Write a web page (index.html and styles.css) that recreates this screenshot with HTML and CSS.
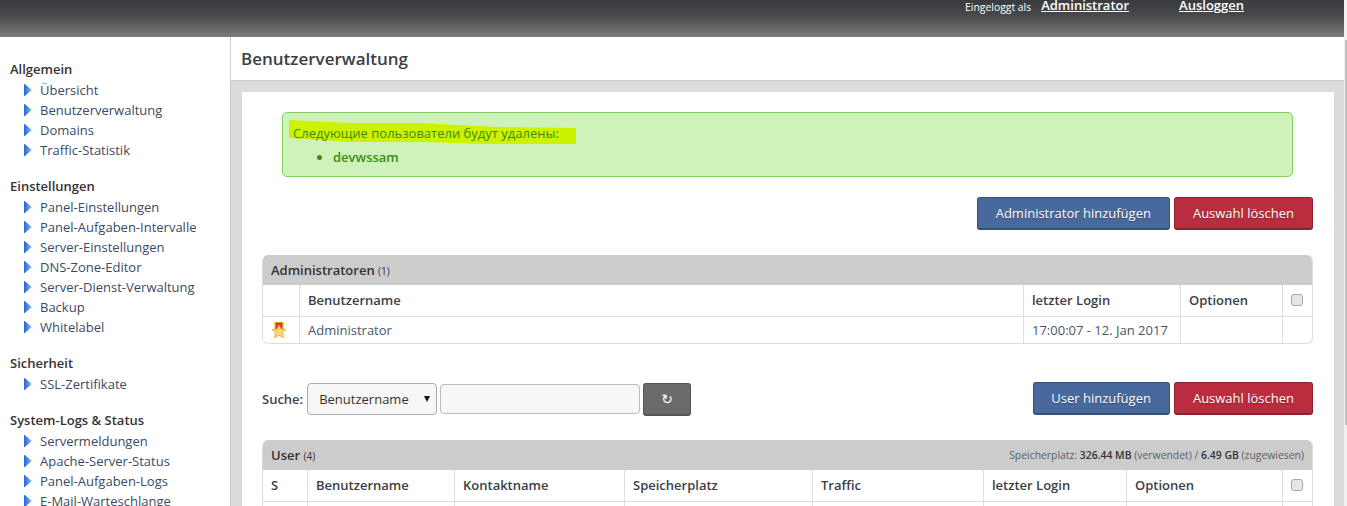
FILE: index.html
```html
<!DOCTYPE html>
<html lang="de">
<head>
<meta charset="utf-8">
<title>Benutzerverwaltung</title>
<link rel="stylesheet" href="styles.css">
</head>
<body>
<div class="frame">
<header class="topbar">
  <span class="login-label">Eingeloggt als</span>
  <a class="top-link top-link-admin" href="#">Administrator</a>
  <a class="top-link" href="#">Ausloggen</a>
</header>
<div class="shell">
  <nav class="sidebar">
    <h4>Allgemein</h4>
    <ul>
      <li><i class="arrow"></i>Übersicht</li>
      <li><i class="arrow"></i>Benutzerverwaltung</li>
      <li><i class="arrow"></i>Domains</li>
      <li><i class="arrow"></i>Traffic-Statistik</li>
    </ul>
    <h4>Einstellungen</h4>
    <ul>
      <li><i class="arrow"></i>Panel-Einstellungen</li>
      <li><i class="arrow"></i>Panel-Aufgaben-Intervalle</li>
      <li><i class="arrow"></i>Server-Einstellungen</li>
      <li><i class="arrow"></i>DNS-Zone-Editor</li>
      <li><i class="arrow"></i>Server-Dienst-Verwaltung</li>
      <li><i class="arrow"></i>Backup</li>
      <li><i class="arrow"></i>Whitelabel</li>
    </ul>
    <h4>Sicherheit</h4>
    <ul>
      <li><i class="arrow"></i>SSL-Zertifikate</li>
    </ul>
    <h4>System-Logs &amp; Status</h4>
    <ul>
      <li><i class="arrow"></i>Servermeldungen</li>
      <li><i class="arrow"></i>Apache-Server-Status</li>
      <li><i class="arrow"></i>Panel-Aufgaben-Logs</li>
      <li><i class="arrow"></i>E-Mail-Warteschlange</li>
    </ul>
  </nav>
  <main class="main">
    <h1 class="page-title">Benutzerverwaltung</h1>
    <div class="content">
      <section class="panel">
        <div class="alert">
          <svg class="marker" viewBox="0 0 287 25" preserveAspectRatio="none"><path d="M0 0L60 3L130 3L210 7L287 8L287 24L200 24L130 22L60 22L0 18Z" fill="#cdf200"/></svg>
          <p class="alert-text">Следующие пользователи будут удалены:</p>
          <ul class="alert-list"><li>devwssam</li></ul>
        </div>
        <div class="actions">
          <button class="btn btn-blue">Administrator hinzufügen</button>
          <button class="btn btn-red">Auswahl löschen</button>
        </div>
        <div class="box box-admin">
          <div class="box-head"><span class="box-title">Administratoren <small>(1)</small></span></div>
          <table>
            <colgroup><col class="ca1"><col class="ca2"><col class="ca3"><col class="ca4"><col class="ca5"></colgroup>
            <tr class="head-row"><th></th><th>Benutzername</th><th>letzter Login</th><th>Optionen</th><th class="check-cell"><span class="check"></span></th></tr>
            <tr class="data-row"><td class="star-cell"><svg class="star" viewBox="0 0 16 16"><path d="M3.5 0H12.5V8H3.5Z" fill="#e8962c"/><path d="M5 1H11V7H5Z" fill="#d43a30"/><path d="M8 3L10.2 7L15 7.6L11.5 10.8L12.6 15.8L8 13.3L3.4 15.8L4.5 10.8L1 7.6L5.8 7Z" fill="#fbd566" stroke="#e0a040" stroke-width=".7"/></svg></td><td>Administrator</td><td>17:00:07 - 12. Jan 2017</td><td></td><td></td></tr>
          </table>
        </div>
        <div class="toolbar">
          <form class="search">
            <label class="search-label">Suche:</label>
            <span class="select">Benutzername<i class="caret"></i></span>
            <span class="input"></span>
            <span class="refresh">↻</span>
          </form>
          <div class="toolbar-actions">
            <button class="btn btn-blue">User hinzufügen</button>
            <button class="btn btn-red">Auswahl löschen</button>
          </div>
        </div>
        <div class="box">
          <div class="box-head">
            <span class="box-title">User <small>(4)</small></span>
            <span class="quota">Speicherplatz: <b>326.44 MB</b> (verwendet) / <b>6.49 GB</b> (zugewiesen)</span>
          </div>
          <table>
            <colgroup><col class="cu1"><col class="cu2"><col class="cu3"><col class="cu4"><col class="cu5"><col class="cu6"><col class="cu7"><col class="cu8"></colgroup>
            <tr class="head-row"><th>S</th><th>Benutzername</th><th>Kontaktname</th><th>Speicherplatz</th><th>Traffic</th><th>letzter Login</th><th>Optionen</th><th class="check-cell"><span class="check"></span></th></tr>
            <tr class="data-row"><td></td><td></td><td></td><td></td><td></td><td></td><td></td><td></td></tr>
          </table>
        </div>
      </section>
    </div>
  </main>
</div>
</div>
<div class="scrollbar"></div>
</body>
</html>
```
FILE: styles.css
```css
* { box-sizing: border-box; }
html, body { margin: 0; height: 506px; overflow: hidden; }
body { display: flex; font-family: "Open Sans", "Noto Sans", sans-serif; font-size: 13px; color: #40454d; background: #fff; }
.frame { width: 1344px; flex: none; }

.topbar { height: 37px; display: flex; align-items: flex-start; justify-content: flex-end; padding-right: 100px; background: linear-gradient(#3a3b3e 0%, #46484b 40%, #7a7c7e 100%); color: #fff; }
.login-label { font-size: 10.4px; line-height: 14px; margin-top: 0; margin-right: 10px; }
.top-link { color: #fff; font-weight: 600; font-size: 13px; line-height: 11px; text-decoration: underline; }
.top-link-admin { margin-right: 50px; }

.shell { display: flex; height: 469px; }
.sidebar { width: 230px; flex: none; padding: 23px 0 0 10px; overflow: hidden; }
.sidebar h4 { margin: 0; font-size: 13px; font-weight: 600; line-height: 18px; color: #333; }
.sidebar ul { list-style: none; margin: 2px 0 17px; padding: 0 0 0 14px; }
.sidebar li { display: flex; align-items: center; height: 20px; color: #3b4a66; font-size: 13px; white-space: nowrap; }
.arrow { width: 8px; height: 13px; margin-right: 8px; flex: none; background: linear-gradient(90deg, #2a66d0 0%, #4d8ae0 45%, #a8c8f0 100%); clip-path: polygon(0 0, 100% 50%, 0 100%); }

.main { width: 1114px; flex: none; border-left: 1px solid #ccc; display: flex; flex-direction: column; }
.page-title { margin: 0; height: 44px; border-bottom: 1px solid #ccc; padding-left: 10px; font-size: 17px; font-weight: 600; line-height: 43px; color: #3a3f46; }
.content { flex: 1; background: #dcdcdc; padding: 11px 10px 0 11px; overflow: hidden; }
.panel { background: #fff; padding: 20px 21px 0 20px; width: 1092px; height: 420px; }

.alert { position: relative; height: 65px; width: 1011px; margin-left: 20px; background: #cff2bb; border: 1px solid #7ed05f; border-radius: 5px; padding: 10px; color: #3d8b12; }
.marker { position: absolute; left: 6px; top: 7px; width: 287px; height: 25px; }
.alert-text { position: relative; margin: 0; line-height: 20px; font-size: 13px; }
.alert-list { margin: 4px 0 0; padding-left: 40px; line-height: 20px; font-weight: 600; }
.actions { display: flex; justify-content: flex-end; gap: 4px; margin-top: 20px; width: 1051px; }
.btn { font: 13px "Open Sans", sans-serif; color: #fff; height: 33px; padding: 0 18px 1px; border-radius: 3px; border: 1px solid; border-bottom-width: 2px; text-shadow: 0 1px 1px rgba(0,0,0,.3); }
.btn-blue { background: #49689c; border-color: #34507e; }
.btn-red { background: #b92d3e; border-color: #8e2230; }

.box { width: 1051px; border: 1px solid #ddd; border-top: none; border-radius: 6px; overflow: hidden; }
.box-admin { margin-top: 25px; }
.box-head { height: 30px; background: #ccc; display: flex; justify-content: space-between; align-items: center; padding: 0 8px; }
.box-title { color: #333; font-size: 13px; font-weight: 600; }
.box-title small { font-size: 10px; font-weight: 400; }
.quota { font-size: 10.4px; color: #5a5e64; }
.quota b { font-weight: 600; color: #333; }
table { border-collapse: separate; border-spacing: 0; table-layout: fixed; width: 100%; }
th, td { border-left: 1px solid #ddd; border-bottom: 1px solid #ddd; padding: 0 0 0 8px; text-align: left; font-size: 13px; }
th:first-child, td:first-child { border-left: none; }
th { height: 32px; padding-bottom: 1px; font-weight: 600; color: #3a3f46; }
td { height: 26px; color: #4b5565; }
.box-admin tr:last-child td { border-bottom: none; }
.ca1 { width: 36px; } .ca3 { width: 157px; } .ca4 { width: 102px; } .ca5 { width: 30px; }
.cu1 { width: 44px; } .cu2 { width: 147px; } .cu3 { width: 170px; } .cu4 { width: 188px; } .cu5 { width: 171px; } .cu6 { width: 143px; } .cu7 { width: 156px; } .cu8 { width: 30px; }
.check { display: block; width: 12px; height: 12px; background: #e6e6e6; border: 1px solid #a5a5a5; border-radius: 3px; }
.star { display: block; width: 16px; height: 16px; }

.toolbar { display: flex; justify-content: space-between; align-items: flex-start; width: 1051px; margin-top: 38px; height: 34px; }
.search { display: flex; align-items: flex-start; padding-top: 1px; }
.search-label { font-weight: 600; margin-right: 4px; line-height: 32px; color: #40454d; }
.select { position: relative; display: flex; align-items: center; width: 130px; height: 32px; padding-left: 11px; border: 1px solid #aaa; border-radius: 4px; background: #f7f7f7; color: #333; }
.caret { position: absolute; right: 6px; top: 12px; border: 3.5px solid transparent; border-top: 6px solid #111; border-bottom: 0; }
.input { width: 200px; height: 30px; margin: 1px 0 0 3px; border: 1px solid #bbb; border-radius: 4px; background: #f7f7f7; }
.refresh { display: flex; align-items: center; justify-content: center; width: 48px; height: 33px; margin-left: 3px; background: #6b6b6b; border: 1px solid #555; border-bottom-width: 2px; border-radius: 3px; color: #fff; font-family: "DejaVu Sans", sans-serif; font-size: 14px; }
.toolbar-actions { display: flex; gap: 4px; }
.toolbar-actions .btn-blue { padding: 0 18px 1px 17.5px; }
.toolbar + .box { margin-top: 24px; }

.scrollbar { width: 3px; flex: none; background: linear-gradient(90deg, #f1f1f1 1px, #c1c1c1 1px) 0 40px / 100% 385px no-repeat, #f1f1f1; }
```
